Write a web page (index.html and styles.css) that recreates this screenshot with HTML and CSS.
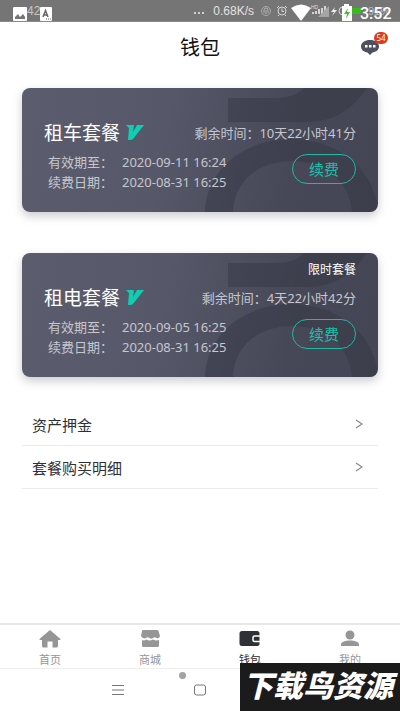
FILE: index.html
```html
<!DOCTYPE html>
<html lang="zh-CN">
<head>
<meta charset="utf-8">
<meta name="viewport" content="width=device-width, initial-scale=1">
<title>钱包</title>
<link rel="stylesheet" href="styles.css">
</head>
<body>
<svg class="defs" aria-hidden="true">
  <symbol id="art" viewBox="0 0 356 124">
    <path d="M206 10H252Q274 10 282 0H345Q322 34 286 34H206Z"/>
    <path fill-rule="evenodd" d="M183 124C184 82 222 51 269 51S354 82 356 124H330C328 93 303 73 270 73S212 93 211 124Z"/>
  </symbol>
  <symbol id="vip" viewBox="0 0 18 15">
    <path d="M0 0H8L7 7L11 0H18L7 14Q6 15 4 15H2L3 3Z"/>
  </symbol>
  <symbol id="chevron" viewBox="0 0 8 10">
    <path d="M1 1L7 5L1 9" fill="none" stroke="currentColor" stroke-width="1.2"/>
  </symbol>
</svg>

<div class="status">
  <div class="status-left">
    <svg width="14" height="14" viewBox="0 0 14 14"><rect width="14" height="14" rx="1" fill="#fff"/><path d="M2 12V10L5 7L7 10L10 7L12 10V12Z" fill="#757575"/></svg>
    <span>42</span>
    <svg width="12" height="14" viewBox="0 0 12 14"><rect width="12" height="14" rx="1" fill="#fff"/><path d="M3 10L5.500 3.500L8 10M4 8H7" fill="none" stroke="#666" stroke-width="1.500"/><path d="M6 12H11" stroke="#666" stroke-dasharray="1 1"/></svg>
  </div>
  <div class="status-right">
    <svg width="12" height="12" viewBox="0 0 12 12" fill="#eee"><circle cx="2" cy="8" r="1"/><circle cx="6" cy="8" r="1"/><circle cx="10" cy="8" r="1"/></svg>
    <span>0.68K/s</span>
    <svg width="136" height="22" viewBox="0 0 136 22" fill="none" stroke="#d5d5d5">
      <circle cx="6" cy="11" r="4.500" stroke="#aaa"/><path d="M4 13V10A2 2 0 0 1 8 10V13M6 10V14" stroke="#b5b5b5"/>
      <circle cx="22" cy="11" r="4"/><path d="M22 8.500V11.500H24M17 8L19 6M27 8L25 6M19 15L18 16M25 15L26 16"/>
      <path d="M31 8Q41 1 51 8L41 21Z" fill="#fff" stroke="none"/>
      <path d="M53 14V12M56 14V11M59 14V9M62 14V8M65 14V6" stroke-width="2"/>
      <path d="M58 17L69 6V17Z" fill="#a5a5a5" stroke="none"/>
      <path d="M75 7L71 12H74L72 16L77 10H74Z" fill="#eee" stroke="none"/>
      <path d="M83 7A4 4 0 0 0 83 15"/>
      <path d="M82 6H84V4H89V6H92V21H82Z" fill="#fff" stroke="none"/><path d="M88 8L84 14H87L86 19L90 12H87Z" fill="#4b3" stroke="none"/>
      <rect x="92" y="8" width="9" height="6" fill="#39b91c" stroke="none"/>
      <text x="51" y="9" class="tiny">HD</text>
      <text x="108" y="15" class="percent">91%</text>
      <text x="100" y="19" class="clock">3:52</text>
    </svg>
  </div>
</div>

<header class="header">
  <h1>钱包</h1>
  <button class="chat" aria-label="消息">
    <svg width="18" height="15" viewBox="0 0 18 15"><path d="M9 0C14 0 18 2.500 18 6.500C18 10 15 12 11.500 12.500L9 15L6.500 12.500C3 12 0 10 0 6.500C0 2.500 4 0 9 0Z" fill="#4d515f"/><path d="M4 5H6.500V7.500H4ZM8 5H10.500V7.500H8ZM12 5H14.500V7.500H12Z" fill="#fff"/></svg>
    <span class="badge">54</span>
  </button>
</header>

<main class="main">
  <section class="card">
    <svg class="art" aria-hidden="true"><use href="#art"/></svg>
    <p class="tag"></p>
    <div class="card-top">
      <h2>租车套餐</h2>
      <svg class="vip"><use href="#vip"/></svg>
      <p class="remain">剩余时间：10天22小时41分</p>
    </div>
    <div class="card-bottom">
      <dl>
        <dt>有效期至：</dt><dd>2020-09-11 16:24</dd>
        <dt>续费日期：</dt><dd>2020-08-31 16:25</dd>
      </dl>
      <button class="renew">续费</button>
    </div>
  </section>

  <section class="card">
    <svg class="art" aria-hidden="true"><use href="#art"/></svg>
    <p class="tag">限时套餐</p>
    <div class="card-top">
      <h2>租电套餐</h2>
      <svg class="vip"><use href="#vip"/></svg>
      <p class="remain">剩余时间：4天22小时42分</p>
    </div>
    <div class="card-bottom">
      <dl>
        <dt>有效期至：</dt><dd>2020-09-05 16:25</dd>
        <dt>续费日期：</dt><dd>2020-08-31 16:25</dd>
      </dl>
      <button class="renew">续费</button>
    </div>
  </section>

  <nav class="list">
    <a href="#deposit">资产押金<svg class="chevron"><use href="#chevron"/></svg></a>
    <a href="#orders">套餐购买明细<svg class="chevron"><use href="#chevron"/></svg></a>
  </nav>
</main>

<footer class="footer">
  <nav class="tabs">
    <a href="#home"><svg width="22" height="18" viewBox="0 0 22 18"><path d="M11 0L21.500 9Q22 10 20.500 10H19V16Q19 17.500 17.500 17.500H13.500V11.500H8.500V17.500H4.500Q3 17.500 3 16V10H1.500Q0 10 .5 9Z" fill="currentColor"/></svg>首页</a>
    <a href="#shop"><svg width="22" height="18" viewBox="0 0 22 18"><path d="M4 0H18Q19 0 19.500 1L21 6Q20 9 17.500 8Q15.500 6.500 14 8Q12 9.500 10.500 8Q8.500 6.500 7 8Q4 9.500 2 6L3 1Q3.300 0 4 0ZM3 10Q5 11 7.500 9.500Q10 11.500 14 9.500Q17 11 20 10V15.500Q20 17 18.500 17H4.500Q3 17 3 15.500Z" fill="currentColor"/></svg>商城</a>
    <a href="#wallet" class="active" aria-current="page"><svg width="22" height="18" viewBox="0 0 22 18"><path d="M3 1H18Q20.500 1 20.500 3.500V14Q20.500 16 18.500 16H3Q.5 16 .5 14V3.500Q.5 1 3 1Z" fill="currentColor"/><path d="M22 6H15.500Q14 6 14 7.500V10Q14 11.500 15.500 11.500H22" fill="none" stroke="#fff" stroke-width="1.500"/></svg>钱包</a>
    <a href="#me"><svg width="22" height="18" viewBox="0 0 22 18"><circle cx="11" cy="5" r="4.500" fill="currentColor"/><path d="M2 16V14.500C2 11.500 7 10.500 11 10.500S20 11.500 20 14.500V16Z" fill="currentColor"/></svg>我的</a>
  </nav>
  <div class="system">
    <i class="dot"></i>
    <button aria-label="菜单"><svg width="12" height="12" viewBox="0 0 12 12"><path d="M0 1.500H12M0 6H12M0 10.500H12" stroke="#777"/></svg></button>
    <button aria-label="主屏幕"><svg width="12" height="12" viewBox="0 0 12 12"><rect x=".5" y="1" width="11" height="10" rx="2" fill="none" stroke="#777"/></svg></button>
  </div>
  <div class="banner">下载鸟资源</div>
</footer>
</body>
</html>
```
FILE: styles.css
```css
* {
  box-sizing: border-box;
  margin: 0;
  padding: 0;
}

body {
  display: flex;
  flex-direction: column;
  min-height: 100vh;
  background: #fff;
  color: #2e3038;
  font-family: "Noto Sans", "Noto Sans CJK SC", sans-serif;
}

button {
  border: 0;
  background: none;
  font: inherit;
}

a {
  color: inherit;
  text-decoration: none;
}

.defs {
  position: absolute;
  width: 0;
  height: 0;
}

.status {
  display: flex;
  justify-content: space-between;
  height: 22px;
  padding-left: 13px;
  padding-right: 4px;
  background: #757575;
  border-bottom: 1px solid #8a8a8a;
  color: #e2e2e2;
  font-family: "Liberation Sans", sans-serif;
  font-size: 12px;
}

.status-left {
  display: flex;
  align-items: flex-end;
}

.status-left span {
  align-self: center;
  color: #c5c5c5;
}

.status-right {
  display: flex;
  align-items: center;
}

.status-right span {
  padding: 0 6px 0 8px;
}

.tiny {
  fill: #ddd;
  stroke: none;
  font-size: 5px;
}

.percent {
  fill: #bbb;
  stroke: none;
  font-size: 11px;
}

.clock {
  fill: #fff;
  stroke: none;
  font-family: Roboto, sans-serif;
  font-size: 16px;
  font-weight: 500;
}

.header {
  position: relative;
  display: flex;
  align-items: center;
  justify-content: center;
  height: 52px;
}

.header h1 {
  color: #111;
  font-size: 20px;
  font-weight: 400;
  line-height: 28px;
}

.chat {
  position: absolute;
  top: 18px;
  right: 21px;
  height: 15px;
}

.chat svg {
  display: block;
}

.badge {
  position: absolute;
  top: -8px;
  left: 13px;
  width: 14px;
  height: 12px;
  border-radius: 6px;
  background: #db3a20;
  color: #fff;
  font-size: 8px;
  line-height: 12px;
}

.main {
  flex: 1;
  padding: 14px 22px;
}

.card {
  position: relative;
  height: 124px;
  margin-bottom: 41px;
  padding: 8px 22px;
  border-radius: 8px;
  background: linear-gradient(100deg, #5b5c6d 0%, #565869 40%, #464857 75%, #444655 100%);
  box-shadow: 0 4px 10px #5556684d;
  color: #c6c7ce;
}

.card > * {
  position: relative;
}

.card .art {
  position: absolute;
  top: 0;
  right: 0;
  width: 356px;
  height: 124px;
  border-radius: 8px;
  fill: #343643;
  fill-opacity: .45;
}

.tag {
  height: 18px;
  color: #fff;
  font-size: 12px;
  line-height: 18px;
  text-align: right;
}

.card-top {
  display: flex;
  align-items: center;
  height: 36px;
  margin-bottom: 2px;
}

.card h2 {
  color: #fff;
  font-size: 19px;
  font-weight: 400;
}

.vip {
  width: 18px;
  height: 15px;
  margin-left: 6px;
  fill: #0fcdb0;
}

.remain {
  margin-left: auto;
  font-size: 13px;
}

.card-bottom {
  display: flex;
  align-items: center;
  justify-content: space-between;
}

dl {
  display: grid;
  grid-template-columns: 74px auto;
  padding-left: 4px;
  font-size: 13px;
  line-height: 20px;
}

.renew {
  width: 64px;
  height: 30px;
  margin-bottom: 6px;
  border: 1px solid #1fb9a4;
  border-radius: 15px;
  color: #1ac0aa;
  font-size: 15px;
  line-height: 28px;
}

.list {
  margin-top: -15px;
}

.list a {
  display: flex;
  align-items: center;
  justify-content: space-between;
  height: 43px;
  padding: 0 15px 0 10px;
  border-bottom: 1px solid #ececec;
  font-size: 15px;
}

.chevron {
  width: 8px;
  height: 10px;
  color: #888;
}

.footer {
  position: relative;
}

.tabs {
  display: grid;
  grid-template-columns: repeat(4, 1fr);
  height: 46px;
  border-top: 2px solid #e8e8e8;
  border-bottom: 1px solid #eee;
}

.tabs a {
  display: flex;
  flex-direction: column;
  align-items: center;
  gap: 3px;
  padding-top: 5px;
  color: #969696;
  font-size: 11px;
  line-height: 18px;
}

.tabs svg {
  flex: none;
}

.tabs .active {
  color: #303136;
}

.system {
  position: relative;
  display: flex;
  justify-content: center;
  gap: 70px;
  height: 42px;
  padding-right: 82px;
}

.dot {
  position: absolute;
  top: 3px;
  left: calc(50% - 21px);
  width: 7px;
  height: 7px;
  border-radius: 50%;
  background: #a2a2a2;
}

.banner {
  position: absolute;
  right: 0;
  bottom: 0;
  width: 160px;
  height: 48px;
  padding-right: 4px;
  background: #1b1b1b;
  color: #fff;
  font-size: 30px;
  font-style: italic;
  font-weight: 900;
  line-height: 46px;
  text-align: center;
  white-space: nowrap;
}
```
